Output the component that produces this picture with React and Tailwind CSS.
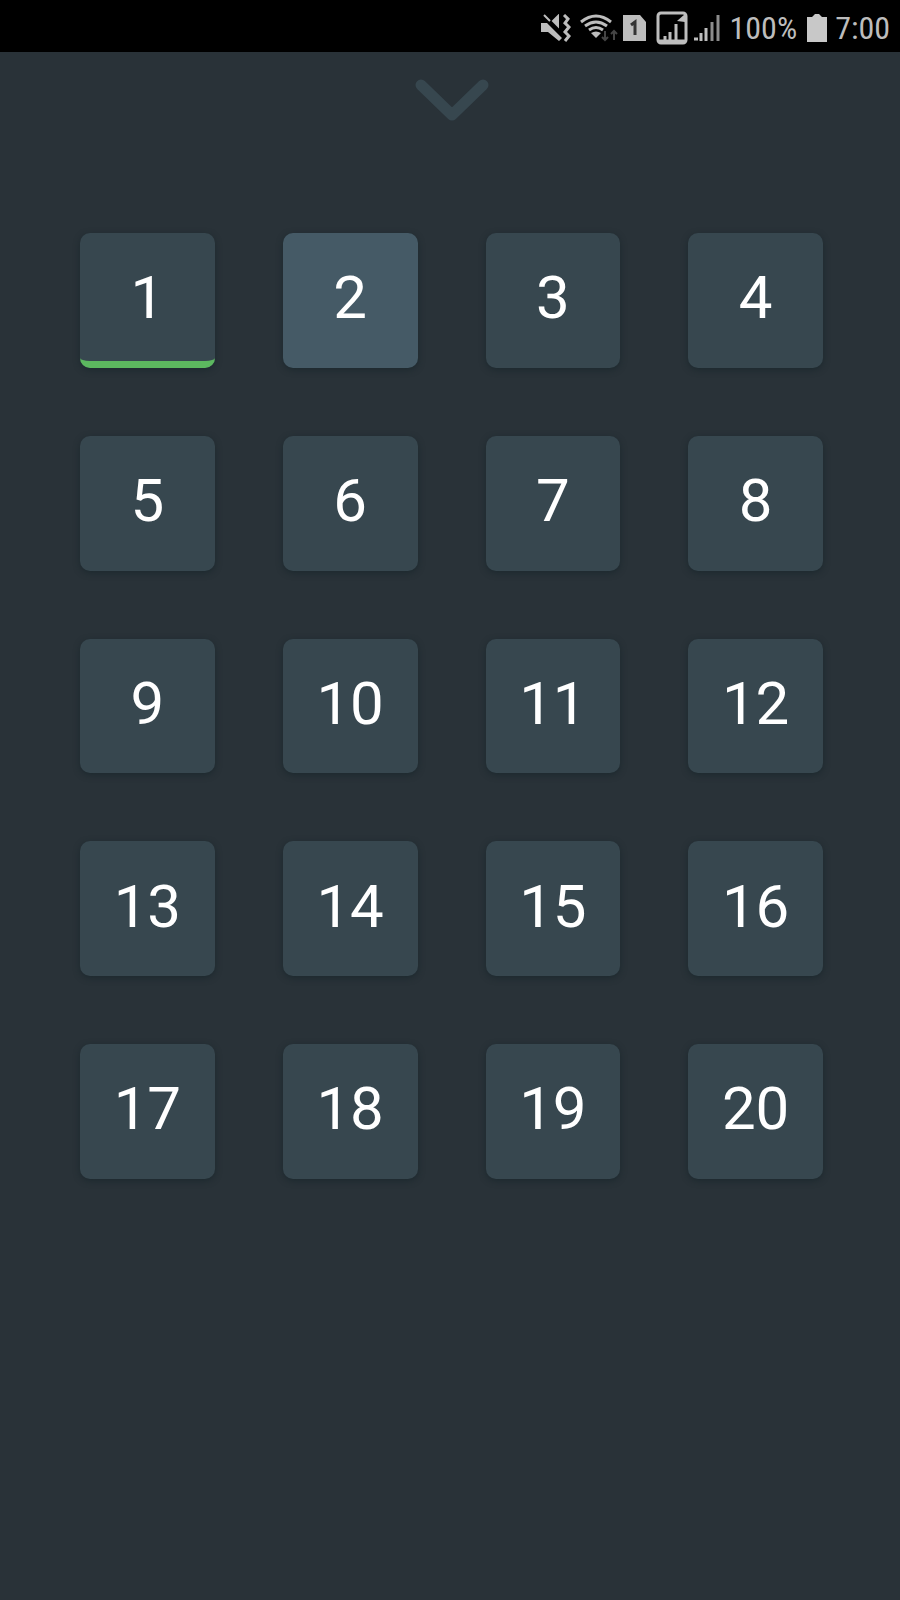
import React from "react";

const levels = Array.from({ length: 20 }, (_, i) => i + 1);

const StatusBar = () => (
  <header className="flex h-[52px] items-center justify-end bg-black pt-1 pr-2.5 text-[#bdbdbd]">
    <svg viewBox="0 0 32 28" className="h-7 w-8" fill="currentColor" aria-label="Muted">
      <path d="M1 9h6l15 15-3 3-11-9H1z" />
      <path d="M4 1l6 6M13 7l5-5v10z" stroke="currentColor" strokeWidth="2" />
      <path d="M24 1l4 4-3 4 4 4-4 5 4 4-4 5" fill="none" stroke="currentColor" strokeWidth="3" />
    </svg>
    <svg viewBox="0 0 38 28" className="ml-2 h-7 w-[38px]" fill="none" stroke="currentColor" strokeWidth="3" aria-label="Wi-Fi">
      <path d="M1 8Q16-4 31 8M5 12q11-8 22 0M9 16q7-5 14 0" />
      <path d="M11 19q5-3 10 0l-5 5z" fill="currentColor" stroke="none" />
      <path d="M25 17v9m-3-3l3 3 3-3M34 26v-9m-3 3l3-3 3 3" stroke="#444" strokeWidth="2" />
    </svg>
    <svg viewBox="0 0 24 28" className="ml-1 h-7 w-6" aria-label="SIM 1">
      <path d="M1 1h17l6 7v19H1z" fill="currentColor" />
      <path d="M9 11l4-3v13" fill="none" stroke="#333" strokeWidth="3" />
    </svg>
    <svg viewBox="0 0 32 34" className="ml-2.5 h-[34px] w-8" fill="none" stroke="currentColor" strokeWidth="3" aria-label="Signal, SIM 1">
      <rect x="2" y="2" width="28" height="30" rx="3" />
      <path d="M3 30h26" />
      <path d="M9 25v5M14 21v9M20 13v17" />
      <path d="M21 10l8-7v8z" fill="currentColor" stroke="none" />
    </svg>
    <svg viewBox="0 0 26 28" className="ml-1.5 h-7 w-[26px]" fill="none" stroke="currentColor" strokeWidth="3" aria-label="Signal, SIM 2">
      <path d="M0 25h4M7 19v8M12 14v13" />
      <path d="M18 8v19M24 1v26" stroke="#8c8c8c" />
    </svg>
    <span className="ml-2.5 text-[32px] leading-8">100%</span>
    <svg viewBox="0 0 20 28" className="ml-2.5 h-7 w-5" fill="#c8c8c8" aria-label="Battery full">
      <path d="M0 3h5l3-3h4l3 3h5v25H0z" />
    </svg>
    <span className="ml-2 text-[32px] leading-8">7:00</span>
  </header>
);

const LevelButton = ({ level, done, selected }) => (
  <button
    className={`flex aspect-square items-center justify-center rounded-[10px] pb-1 text-[60px] leading-none text-white shadow-[0_2px_6px_rgba(20,35,40,0.6)] ${
      selected ? "bg-[#455a66]" : "bg-[#37474f]"
    } ${done ? "relative after:absolute after:inset-0 after:rounded-[10px] after:border-b-[7px] after:border-[#5cb85f]" : ""}`}
  >
    {level}
  </button>
);

export default function App() {
  return (
    <div className="min-h-screen bg-[#293238] font-['Roboto_Condensed','Liberation_Sans_Narrow',Roboto,sans-serif]">
      <StatusBar />
      <main className="pr-[77px] pl-20 font-[Roboto,sans-serif]">
        <button className="mx-auto mt-6 block" aria-label="Close">
          <svg viewBox="0 0 76 48" className="h-12 w-[76px]" fill="none" stroke="#37474f" strokeWidth="11" strokeLinecap="round" strokeLinejoin="round">
            <path d="M7 9l31 30L69 9" />
          </svg>
        </button>
        <div className="mt-[109px] grid grid-cols-4 gap-[68px]">
          {levels.map((level) => (
            <LevelButton key={level} level={level} done={level === 1} selected={level === 2} />
          ))}
        </div>
      </main>
    </div>
  );
}
